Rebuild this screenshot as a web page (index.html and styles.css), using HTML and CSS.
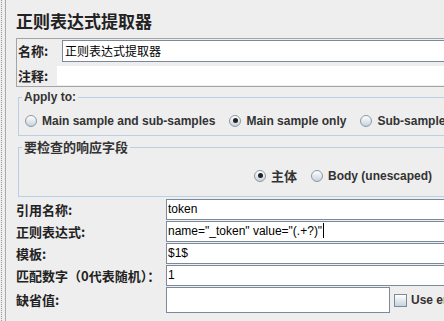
FILE: index.html
```html
<!DOCTYPE html>
<html lang="zh">
<head>
<meta charset="utf-8">
<title>正则表达式提取器</title>
<link rel="stylesheet" href="styles.css">
</head>
<body>
<div class="app">
  <div class="divider"></div>
  <div class="main">
    <h1 class="title">正则表达式提取器</h1>
    <div class="namebox">
      <div class="row">
        <span class="lbl lbl-name">名称:</span>
        <div class="field field-name">正则表达式提取器</div>
      </div>
      <div class="row">
        <span class="lbl lbl-comment">注释:</span>
        <div class="field-plain"></div>
      </div>
    </div>

    <fieldset class="group">
      <legend class="legend">Apply to:</legend>
      <div class="radios radios-apply">
        <span class="radio"><span class="dot"></span>Main sample and sub-samples</span>
        <span class="radio"><span class="dot on"></span>Main sample only</span>
        <span class="radio"><span class="dot"></span>Sub-samples only</span>
        <span class="radio"><span class="dot"></span>JMeter Variable Name to use</span>
      </div>
    </fieldset>

    <fieldset class="group group-field">
      <legend class="legend legend-cjk">要检查的响应字段</legend>
      <div class="radios radios-field">
        <span class="radio"><span class="dot on"></span><span class="cjk">主体</span></span>
        <span class="radio"><span class="dot"></span>Body (unescaped)</span>
        <span class="radio"><span class="dot"></span>Body as a Document</span>
        <span class="radio"><span class="dot"></span>Response Headers</span>
      </div>
    </fieldset>

    <div class="form">
      <span class="flbl">引用名称:</span>
      <div class="input">token</div>
      <span class="flbl">正则表达式:</span>
      <div class="input">name="_token" value="(.+?)"<span class="caret"></span></div>
      <span class="flbl">模板:</span>
      <div class="input">$1$</div>
      <span class="flbl">匹配数字（0代表随机）：</span>
      <div class="input">1</div>
      <span class="flbl">缺省值:</span>
      <div class="last">
        <div class="input input-short"></div>
        <span class="check"><span class="box"></span>Use empty default value</span>
      </div>
    </div>
  </div>
</div>
</body>
</html>
```

FILE: styles.css
```css
html, body {
  margin: 0;
  padding: 0;
}
body {
  width: 444px;
  height: 321px;
  overflow: hidden;
  background: #eeeeee;
  font-family: "Liberation Sans", "Noto Sans CJK SC", sans-serif;
  color: #222;
}
.app {
  display: flex;
  height: 321px;
}
.divider {
  flex: none;
  margin-left: 1px;
  width: 3px;
  border-left: 1px dotted #9a9a9a;
  border-right: 1px solid #a8a8a8;
}
.main {
  flex: none;
  width: 600px;
  padding-left: 10px;
}
.title {
  margin: 0;
  padding-top: 11px;
  font-family: "Noto Sans CJK SC", sans-serif;
  font-size: 17px;
  line-height: 20px;
  font-weight: bold;
  color: #222;
}
.namebox {
  margin-top: 7px;
  border: 1px solid #a4a4a4;
  border-right: none;
  padding: 1px 0 1px 1px;
  display: flex;
  flex-direction: column;
  gap: 4px;
}
.row {
  display: flex;
  align-items: center;
}
.lbl {
  flex: none;
  font-family: "Noto Sans CJK SC", sans-serif;
  font-size: 13px;
  font-weight: bold;
  line-height: 16px;
}
.lbl-name { width: 44px; }
.lbl-comment { width: 39px; }
.field {
  flex: 1;
  box-sizing: border-box;
  height: 22px;
  border: 1px solid #7a8a99;
  border-right: none;
  background: #fff;
  padding-left: 2px;
  font-family: "Noto Sans CJK SC", sans-serif;
  font-size: 12px;
  line-height: 20px;
  color: #000;
}
.field-plain {
  flex: 1;
  height: 19px;
  background: #fff;
}
.group {
  margin: 3px 0 0 2px;
  padding: 0;
  min-width: 0;
  border: 1px solid #b8cfe5;
  border-right: none;
}
.group-field {
  margin-top: 4px;
}
.legend {
  margin-left: 3px;
  padding: 0 2px;
  font-size: 12px;
  font-weight: bold;
  line-height: 14px;
  color: #333;
}
.legend-cjk {
  font-family: "Noto Sans CJK SC", sans-serif;
  font-size: 13px;
}
.radios {
  display: flex;
  align-items: center;
  height: 21px;
  white-space: nowrap;
  font-size: 12px;
  font-weight: bold;
  color: #333;
}
.radios-apply {
  padding: 6px 0 4px 6px;
}
.radios-field {
  padding: 11px 0 10px 235px;
}
.radio {
  display: flex;
  align-items: center;
  margin-right: 14px;
}
.cjk {
  font-family: "Noto Sans CJK SC", sans-serif;
  font-size: 13px;
}
.dot {
  position: relative;
  flex: none;
  box-sizing: border-box;
  width: 12px;
  height: 12px;
  margin-right: 5px;
  border-radius: 50%;
  border: 1px solid #8b98a5;
  background: linear-gradient(to bottom, #ffffff, #c7d2dd);
}
.dot.on::after {
  content: "";
  position: absolute;
  left: 2.5px;
  top: 2.5px;
  width: 5px;
  height: 5px;
  border-radius: 50%;
  background: #222;
}
.form {
  margin-top: 2px;
  display: grid;
  grid-template-columns: 150px 1fr;
  row-gap: 1px;
  align-items: center;
}
.flbl {
  font-family: "Noto Sans CJK SC", sans-serif;
  font-size: 13px;
  font-weight: bold;
  line-height: 16px;
  white-space: nowrap;
}
.input {
  box-sizing: border-box;
  height: 21px;
  border: 1px solid #7a8a99;
  border-right: none;
  background: #fff;
  padding-left: 1px;
  font-size: 12px;
  line-height: 19px;
  color: #000;
  white-space: nowrap;
}
.caret {
  display: inline-block;
  width: 1px;
  height: 15px;
  margin-left: 1px;
  background: #000;
  vertical-align: -3px;
}
.last {
  display: flex;
  align-items: center;
}
.input-short {
  flex: none;
  width: 224px;
  height: 26px;
  border-right: 1px solid #7a8a99;
}
.check {
  display: flex;
  align-items: center;
  margin-left: 4px;
  font-size: 12px;
  font-weight: bold;
  color: #333;
  white-space: nowrap;
}
.box {
  flex: none;
  box-sizing: border-box;
  width: 13px;
  height: 13px;
  margin-right: 4px;
  border: 1px solid #7a8a99;
  background: linear-gradient(to bottom, #ffffff, #c7d2dd);
}
```
